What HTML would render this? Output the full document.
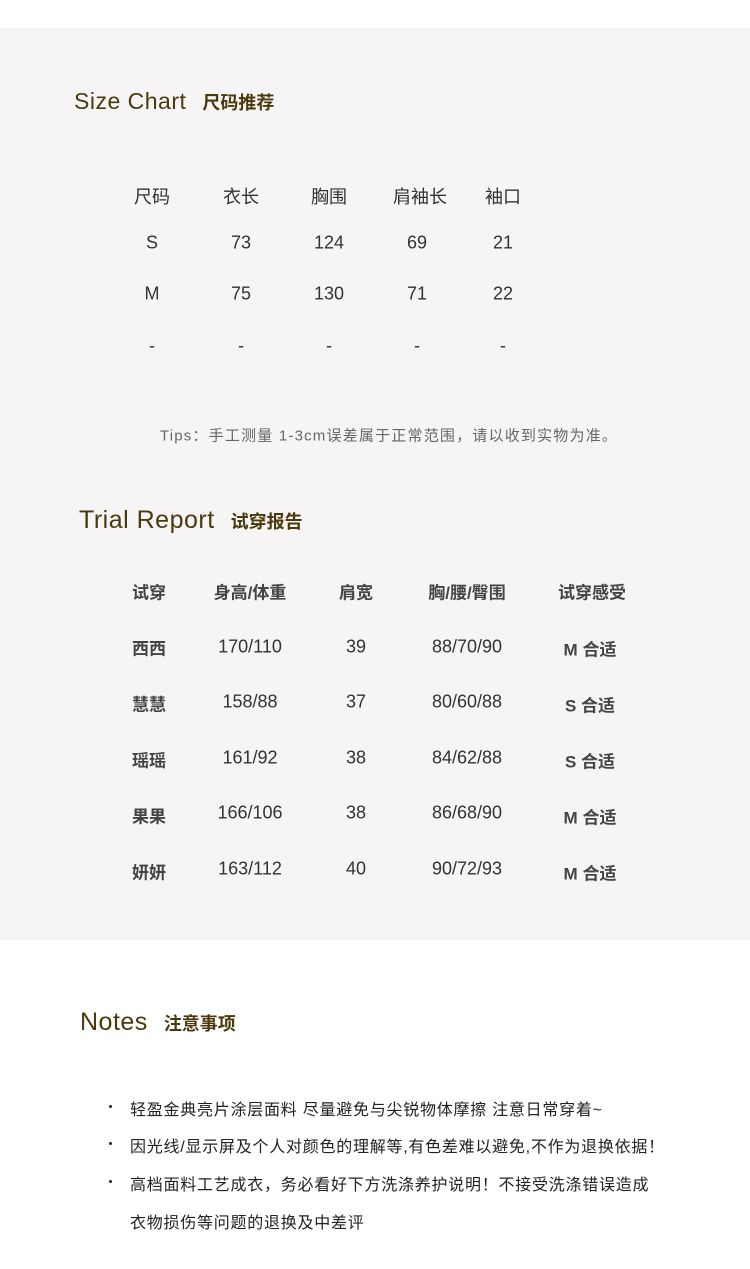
<!DOCTYPE html>
<html><head><meta charset="utf-8"><style>
body{margin:0;width:750px;height:1269px;background:#fff;position:relative;font-family:"Liberation Sans","Noto Sans CJK SC",sans-serif;color:#333;overflow:hidden}
.bg{position:absolute;left:0;top:28px;width:750px;height:912px;background:#f6f4f4}
.t{position:absolute;white-space:nowrap;transform:translate(-50%,-50%)}
.h{position:absolute;white-space:nowrap;color:#4a3a0e}
.h .e{font-size:23px;letter-spacing:0.5px}
.h .c{font-size:18px;margin-left:16px;font-weight:bold}
.s{font-size:18px;color:#333}
.b{font-size:17px;font-weight:bold;color:#444}
.n{font-size:16px;color:#222;position:absolute;white-space:nowrap;letter-spacing:0.75px}
.d{position:absolute;left:109px;width:3px;height:3px;border-radius:50%;background:#222}
</style></head><body>
<div class="bg"></div>
<div class="h" style="left:74px;top:88px"><span class="e">Size Chart</span><span class="c">尺码推荐</span></div>
<div class="h" style="left:79px;top:506px"><span class="e" style="font-size:25px">Trial Report</span><span class="c">试穿报告</span></div>
<div class="h" style="left:80px;top:1008px"><span class="e" style="font-size:25px">Notes</span><span class="c">注意事项</span></div>

<div class="t s" style="left:152px;top:196px">尺码</div><div class="t s" style="left:241px;top:196px">衣长</div><div class="t s" style="left:329px;top:196px">胸围</div><div class="t s" style="left:420px;top:196px">肩袖长</div><div class="t s" style="left:503px;top:196px">袖口</div>
<div class="t s" style="left:152px;top:243px">S</div><div class="t s" style="left:241px;top:243px">73</div><div class="t s" style="left:329px;top:243px">124</div><div class="t s" style="left:417px;top:243px">69</div><div class="t s" style="left:503px;top:243px">21</div>
<div class="t s" style="left:152px;top:294px">M</div><div class="t s" style="left:241px;top:294px">75</div><div class="t s" style="left:329px;top:294px">130</div><div class="t s" style="left:417px;top:294px">71</div><div class="t s" style="left:503px;top:294px">22</div>
<div class="t s" style="left:152px;top:346px">-</div><div class="t s" style="left:241px;top:346px">-</div><div class="t s" style="left:329px;top:346px">-</div><div class="t s" style="left:417px;top:346px">-</div><div class="t s" style="left:503px;top:346px">-</div>
<div class="t" style="left:389px;top:435px;font-size:15px;letter-spacing:1.2px;color:#666">Tips：手工测量 1-3cm误差属于正常范围，请以收到实物为准。</div>

<div class="t b" style="left:149px;top:591px">试穿</div><div class="t b" style="left:250px;top:591px">身高/体重</div><div class="t b" style="left:356px;top:591px">肩宽</div><div class="t b" style="left:467px;top:591px">胸/腰/臀围</div><div class="t b" style="left:592px;top:591px">试穿感受</div>

<div class="t b" style="left:149px;top:647px">西西</div><div class="t s" style="left:250px;top:647px">170/110</div><div class="t s" style="left:356px;top:647px">39</div><div class="t s" style="left:467px;top:647px">88/70/90</div><div class="t b" style="left:590px;top:648px">M 合适</div>
<div class="t b" style="left:149px;top:703px">慧慧</div><div class="t s" style="left:250px;top:702px">158/88</div><div class="t s" style="left:356px;top:702px">37</div><div class="t s" style="left:467px;top:702px">80/60/88</div><div class="t b" style="left:590px;top:704px">S 合适</div>
<div class="t b" style="left:149px;top:759px">瑶瑶</div><div class="t s" style="left:250px;top:758px">161/92</div><div class="t s" style="left:356px;top:758px">38</div><div class="t s" style="left:467px;top:758px">84/62/88</div><div class="t b" style="left:590px;top:760px">S 合适</div>
<div class="t b" style="left:149px;top:815px">果果</div><div class="t s" style="left:250px;top:813px">166/106</div><div class="t s" style="left:356px;top:813px">38</div><div class="t s" style="left:467px;top:813px">86/68/90</div><div class="t b" style="left:590px;top:816px">M 合适</div>
<div class="t b" style="left:149px;top:871px">妍妍</div><div class="t s" style="left:250px;top:869px">163/112</div><div class="t s" style="left:356px;top:869px">40</div><div class="t s" style="left:467px;top:869px">90/72/93</div><div class="t b" style="left:590px;top:872px">M 合适</div>

<div class="d" style="top:1105px"></div><div class="n" style="left:130px;top:1096px">轻盈金典亮片涂层面料 尽量避免与尖锐物体摩擦 注意日常穿着~</div>
<div class="d" style="top:1142px"></div><div class="n" style="left:130px;top:1133px">因光线/显示屏及个人对颜色的理解等,有色差难以避免,不作为退换依据！</div>
<div class="d" style="top:1180px"></div><div class="n" style="left:130px;top:1171px">高档面料工艺成衣，务必看好下方洗涤养护说明！不接受洗涤错误造成</div>
<div class="n" style="left:130px;top:1209px">衣物损伤等问题的退换及中差评</div>
</body></html>
